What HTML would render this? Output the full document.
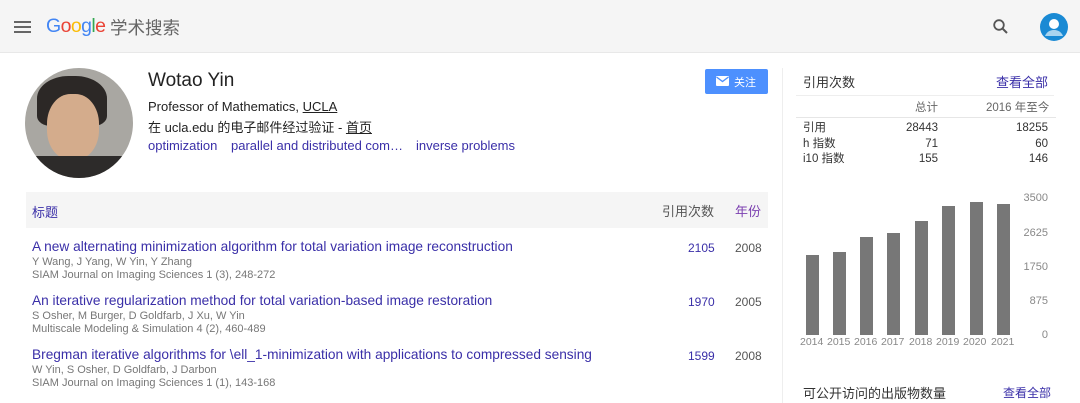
<!DOCTYPE html>
<html><head><meta charset="utf-8"><style>
*{margin:0;padding:0;box-sizing:border-box}
body{width:1080px;height:403px;overflow:hidden;background:#fff;font-family:"Liberation Sans","Noto Sans CJK SC",sans-serif;color:#222;position:relative}
.a{position:absolute;white-space:nowrap}
.lk{color:#3a2fa8}
.g{color:#777}
.bar{position:absolute;width:13px;background:#777;bottom:68px}
.yr{position:absolute;top:336px;font-size:10.5px;color:#888}
.yl{position:absolute;left:1020px;width:28px;text-align:right;font-size:11px;color:#888}
.t{font-size:13.7px}
</style></head><body>
<div class="a" style="left:0;top:0;width:1080px;height:53px;background:#f5f5f5;border-bottom:1px solid #e8e8e8"></div>
<div class="a" style="left:14px;top:21px;width:17px;height:2px;background:#666;box-shadow:0 5px 0 #666,0 10px 0 #666"></div>
<div class="a" style="left:46px;top:15px;font-size:19.5px;letter-spacing:-0.6px"><span style="color:#4285f4">G</span><span style="color:#ea4335">o</span><span style="color:#fbbc05">o</span><span style="color:#4285f4">g</span><span style="color:#34a853">l</span><span style="color:#ea4335">e</span></div>
<div class="a" style="left:110px;top:15px;font-size:17.5px;color:#666">学术搜索</div>
<svg class="a" style="left:992px;top:18px" width="18" height="18" viewBox="0 0 18 18"><circle cx="7" cy="7" r="4.8" fill="none" stroke="#555" stroke-width="1.8"/><path d="M10.5 10.5L15 15" stroke="#555" stroke-width="2"/></svg>
<svg class="a" style="left:1040px;top:13px" width="28" height="28" viewBox="0 0 28 28"><circle cx="14" cy="14" r="14" fill="#1a8ad4"/><circle cx="14" cy="11" r="5" fill="#fff"/><path d="M5 23c2-5 6-6 9-6s7 1 9 6" fill="#a9d4ef"/></svg>

<div class="a" style="left:25px;top:68px;width:108px;height:110px;border-radius:50%;overflow:hidden;background:#a9a7a2">
 <div class="a" style="left:12px;top:8px;width:70px;height:50px;border-radius:45% 45% 20% 20%;background:#2c2826"></div>
 <div class="a" style="left:22px;top:26px;width:52px;height:66px;border-radius:45%;background:#d4ac8c"></div>
 <div class="a" style="left:0;top:88px;width:108px;height:30px;background:#2d2b2a"></div>
</div>
<div class="a" style="left:148px;top:70px;font-size:19px;color:#222">Wotao Yin</div>
<div class="a" style="left:148px;top:99px;font-size:13px">Professor of Mathematics, <u>UCLA</u></div>
<div class="a" style="left:148px;top:117px;font-size:13px">在 ucla.edu 的电子邮件经过验证 - <u>首页</u></div>
<div class="a lk" style="left:148px;top:138px;font-size:13px">optimization</div>
<div class="a lk" style="left:231px;top:138px;font-size:13px">parallel and distributed com…</div>
<div class="a lk" style="left:416px;top:138px;font-size:13px">inverse problems</div>
<div class="a" style="left:705px;top:69px;width:63px;height:25px;background:#4d90fe;border-radius:2px"></div>
<div class="a" style="left:734px;top:74px;font-size:11px;color:#fff">关注</div>
<svg class="a" style="left:716px;top:76px" width="13" height="10" viewBox="0 0 13 10"><rect width="13" height="10" rx="1" fill="#fff"/><path d="M0.5 1L6.5 5.5L12.5 1" stroke="#4d90fe" stroke-width="1.4" fill="none"/></svg>

<div class="a" style="left:26px;top:192px;width:742px;height:36px;background:#f5f5f5"></div>
<div class="a lk" style="left:32px;top:202px;font-size:13px">标题</div>
<div class="a" style="left:662px;top:201px;font-size:13px;color:#555">引用次数</div>
<div class="a" style="left:735px;top:201px;font-size:13px;color:#7b3fb0">年份</div>

<div class="a lk t" style="left:32px;top:239px">A new alternating minimization algorithm for total variation image reconstruction</div>
<div class="a g" style="left:32px;top:256px;font-size:11px">Y Wang, J Yang, W Yin, Y Zhang</div>
<div class="a g" style="left:32px;top:269px;font-size:11px">SIAM Journal on Imaging Sciences 1 (3), 248-272</div>
<div class="a lk" style="left:688px;top:241px;font-size:12px">2105</div><div class="a" style="left:735px;top:241px;font-size:12px;color:#555">2008</div>

<div class="a lk t" style="left:32px;top:293px">An iterative regularization method for total variation-based image restoration</div>
<div class="a g" style="left:32px;top:310px;font-size:11px">S Osher, M Burger, D Goldfarb, J Xu, W Yin</div>
<div class="a g" style="left:32px;top:323px;font-size:11px">Multiscale Modeling &amp; Simulation 4 (2), 460-489</div>
<div class="a lk" style="left:688px;top:295px;font-size:12px">1970</div><div class="a" style="left:735px;top:295px;font-size:12px;color:#555">2005</div>

<div class="a lk t" style="left:32px;top:347px">Bregman iterative algorithms for \ell_1-minimization with applications to compressed sensing</div>
<div class="a g" style="left:32px;top:364px;font-size:11px">W Yin, S Osher, D Goldfarb, J Darbon</div>
<div class="a g" style="left:32px;top:377px;font-size:11px">SIAM Journal on Imaging Sciences 1 (1), 143-168</div>
<div class="a lk" style="left:688px;top:349px;font-size:12px">1599</div><div class="a" style="left:735px;top:349px;font-size:12px;color:#555">2008</div>

<div class="a" style="left:782px;top:68px;width:1px;height:335px;background:#eee"></div>
<div class="a" style="left:803px;top:72px;font-size:13px;color:#333">引用次数</div>
<div class="a lk" style="left:996px;top:72px;font-size:13px">查看全部</div>
<div class="a" style="left:796px;top:95px;width:258px;height:1px;background:#eee"></div>
<div class="a" style="left:915px;top:99px;font-size:11.5px;color:#666">总计</div>
<div class="a" style="left:986px;top:99px;font-size:11.5px;color:#666">2016 年至今</div>
<div class="a" style="left:796px;top:117px;width:260px;height:1px;background:#e6e6e6"></div>
<div class="a" style="left:803px;top:121px;font-size:11.5px;line-height:15.5px;color:#333">引用<br>h 指数<br>i10 指数</div>
<div class="a" style="left:895px;top:121px;width:43px;text-align:right;font-size:11.5px;line-height:15.5px;color:#333">28443<br>71<br>155</div>
<div class="a" style="left:995px;top:121px;width:53px;text-align:right;font-size:11.5px;line-height:15.5px;color:#333">18255<br>60<br>146</div>

<div class="bar" style="left:806px;top:255px"></div>
<div class="bar" style="left:833px;top:252px"></div>
<div class="bar" style="left:860px;top:237px"></div>
<div class="bar" style="left:887px;top:233px"></div>
<div class="bar" style="left:915px;top:221px"></div>
<div class="bar" style="left:942px;top:206px"></div>
<div class="bar" style="left:970px;top:202px"></div>
<div class="bar" style="left:997px;top:204px"></div>
<div class="yr" style="left:800px">2014</div><div class="yr" style="left:827px">2015</div><div class="yr" style="left:854px">2016</div><div class="yr" style="left:881px">2017</div><div class="yr" style="left:909px">2018</div><div class="yr" style="left:936px">2019</div><div class="yr" style="left:963px">2020</div><div class="yr" style="left:991px">2021</div>
<div class="yl" style="top:192px">3500</div><div class="yl" style="top:227px">2625</div><div class="yl" style="top:261px">1750</div><div class="yl" style="top:295px">875</div><div class="yl" style="top:329px">0</div>

<div class="a" style="left:803px;top:383px;font-size:13px;color:#333">可公开访问的出版物数量</div>
<div class="a lk" style="left:1003px;top:384px;font-size:12px">查看全部</div>
</body></html>
